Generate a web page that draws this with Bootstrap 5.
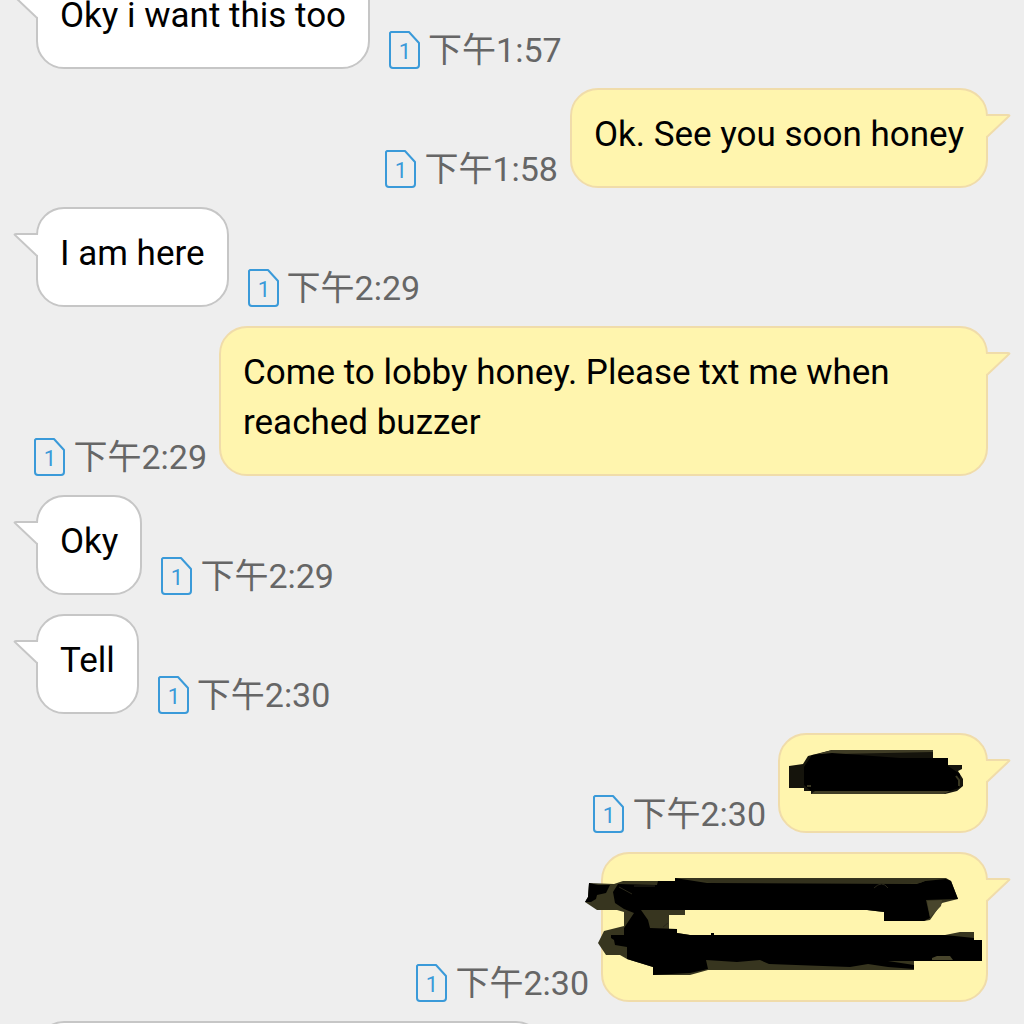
<!DOCTYPE html>
<html lang="zh-Hant">
<head>
<meta charset="utf-8">
<meta name="viewport" content="width=device-width, initial-scale=1">
<title>Messages</title>
<link href="https://cdn.jsdelivr.net/npm/bootstrap@5.3.0/dist/css/bootstrap.min.css" rel="stylesheet">
<style>
  body { background: #eeeeee; font-family: Roboto, "Noto Sans CJK TC", sans-serif; }
  /* The thread is scrolled part-way through its first message */
  .chat-view { height: 100vh; }
  .chat-thread { padding: 0 36px; margin-top: -31px; gap: 19px; }
  .chat-in { gap: 19px; }
  .chat-out { gap: 12px; }
  .bubble {
    --fill: #ffffff; --line: #c6c6c6;
    max-width: calc(100% - 183px); padding: 20px 22px 26px; border: 2px solid var(--line); border-radius: 28px;
    background: var(--fill); color: #000; font-size: 35px; line-height: 50px;
  }
  .chat-out .bubble { --fill: #fff5ae; --line: #f0dcaa; }
  .bubble-tail { top: 23px; width: 26px; height: 28px; fill: var(--fill); stroke: var(--line); stroke-width: 2; }
  .chat-in .bubble-tail { left: -26px; }
  .chat-out .bubble-tail { right: -26px; transform: scaleX(-1); }
  .bubble-next { width: 508px; height: 100px; }
  .stamp { gap: 8px; color: #666; font-size: 34px; line-height: 38px; }
  .sim { width: 31px; height: 38px; fill: none; stroke: #3a9ad9; stroke-width: 2; stroke-linejoin: round; }
  .sim-digit { fill: #3a9ad9; stroke: none; font-size: 22px; font-weight: 400; }
  .scribble { overflow: visible; }
</style>
<script src="https://cdn.jsdelivr.net/npm/bootstrap@5.3.0/dist/js/bootstrap.bundle.min.js"></script>
</head>
<body>
<svg class="d-none" aria-hidden="true">
  <symbol id="sim" viewBox="0 0 31 38">
    <path d="M2 1H20L30 12V34Q30 37 27 37H4Q1 37 1 34V2Z"/>
    <text class="sim-digit" x="16" y="28" text-anchor="middle">1</text>
  </symbol>
  <symbol id="tail" viewBox="0 0 26 28">
    <path stroke="none" d="M2 2H28V28L26 26Q26 25 24 23L3 4Z"/>
    <path fill="none" d="M26 2H4Q1 2 4 4L24 23Q27 25 27 28"/>
  </symbol>
</svg>
<main class="chat-view overflow-hidden">
  <div class="chat-thread d-flex flex-column">
    <div class="chat-in d-flex align-items-end">
      <div class="bubble flex-shrink-0 position-relative"><svg class="bubble-tail position-absolute"><use href="#tail"/></svg>Oky i want this too</div>
      <div class="stamp d-flex flex-shrink-0"><svg class="sim"><use href="#sim"/></svg><time>下午1:57</time></div>
    </div>
    <div class="chat-out d-flex align-items-end justify-content-end">
      <div class="stamp d-flex flex-shrink-0"><svg class="sim"><use href="#sim"/></svg><time>下午1:58</time></div>
      <div class="bubble flex-shrink-0 position-relative"><svg class="bubble-tail position-absolute"><use href="#tail"/></svg>Ok. See you soon honey</div>
    </div>
    <div class="chat-in d-flex align-items-end">
      <div class="bubble flex-shrink-0 position-relative"><svg class="bubble-tail position-absolute"><use href="#tail"/></svg>I am here</div>
      <div class="stamp d-flex flex-shrink-0"><svg class="sim"><use href="#sim"/></svg><time>下午2:29</time></div>
    </div>
    <div class="chat-out d-flex align-items-end justify-content-end">
      <div class="stamp d-flex flex-shrink-0"><svg class="sim"><use href="#sim"/></svg><time>下午2:29</time></div>
      <div class="bubble flex-shrink-0 position-relative"><svg class="bubble-tail position-absolute"><use href="#tail"/></svg>Come to lobby honey. Please txt me when reached buzzer</div>
    </div>
    <div class="chat-in d-flex align-items-end">
      <div class="bubble flex-shrink-0 position-relative"><svg class="bubble-tail position-absolute"><use href="#tail"/></svg>Oky</div>
      <div class="stamp d-flex flex-shrink-0"><svg class="sim"><use href="#sim"/></svg><time>下午2:29</time></div>
    </div>
    <div class="chat-in d-flex align-items-end">
      <div class="bubble flex-shrink-0 position-relative"><svg class="bubble-tail position-absolute"><use href="#tail"/></svg>Tell</div>
      <div class="stamp d-flex flex-shrink-0"><svg class="sim"><use href="#sim"/></svg><time>下午2:30</time></div>
    </div>
    <div class="chat-out d-flex align-items-end justify-content-end">
      <div class="stamp d-flex flex-shrink-0"><svg class="sim"><use href="#sim"/></svg><time>下午2:30</time></div>
      <div class="bubble flex-shrink-0 position-relative"><svg class="bubble-tail position-absolute"><use href="#tail"/></svg>
        <svg class="scribble d-block" width="162" height="50" viewBox="802 755 162 50" role="img" aria-label="Hidden message">
          <path fill="#15140c" d="M789 766L803 764L808 756L820 753L832 750H933V758H948V765H962V769L958 771L963 779V786L957 791L945 794H811V791H804V788H789Z"/>
          <path fill="#403d26" d="M818 754L832 750H933V752L838 754ZM815 791H950L944 794H811Z"/>
          <path fill="#000" d="M804 767L812 755L832 753L900 758H948V766L960 774L959 788L950 791H811L804 785Z"/>
          <path fill="none" stroke="#3a3823" stroke-width="2" d="M956 776L959 780V786M807 786H811"/>
        </svg>
      </div>
    </div>
    <div class="chat-out d-flex align-items-end justify-content-end">
      <div class="stamp d-flex flex-shrink-0"><svg class="sim"><use href="#sim"/></svg><time>下午2:30</time></div>
      <div class="bubble flex-shrink-0 position-relative"><svg class="bubble-tail position-absolute"><use href="#tail"/></svg>
        <svg class="scribble d-block" width="339" height="100" viewBox="625 874 339 100" role="img" aria-label="Hidden message">
          <path fill="#37351f" d="M589 883L614 884L623 881H675V878H946L951 881L958 899L942 903L930 920L924 921H884V912L867 910H685V915H669V929H677V933L690 935H711V933H714V935H945L960 932H974V940H982V961H914V970H708L690 975H653V967L627 959L620 955H606L598 943L604 931L624 926V912L617 910H597L585 902L588 897Z"/>
          <path fill="#000" d="M589 883L598 885H610L606 893L597 895L596 899L591 902L585 902L588 897ZM613 892L618 884L657 885L658 881H675V878L707 883L917 884L925 881L946 879L951 881L958 899L926 900L930 918L924 921H884V912L867 910H641L648 920L650 928L677 929V933L690 935H711V933H714V935H945L974 938V940H982V961H888L914 965V969L888 967L868 964L850 967L769 964L760 960L737 962L706 960L708 969L690 973L653 975V967L627 959V947L615 945L614 940L611 938V935H624V928L634 913L624 909L615 903Z"/>
          <path fill="#48452c" d="M927 901L942 900L941 906L930 917ZM932 958L937 956H950L953 960H932Z"/>
          <path fill="#33311d" d="M698 879H930L920 883H712Z"/>
          <path fill="none" stroke="#29271a" stroke-width="1" d="M634 886H655M874 888Q882 880 888 888M619 887L632 894M663 927L668 923"/>
        </svg>
      </div>
    </div>
    <div class="chat-in d-flex align-items-end">
      <div class="bubble bubble-next position-relative"><svg class="bubble-tail position-absolute"><use href="#tail"/></svg></div>
    </div>
  </div>
</main>
</body>
</html>
